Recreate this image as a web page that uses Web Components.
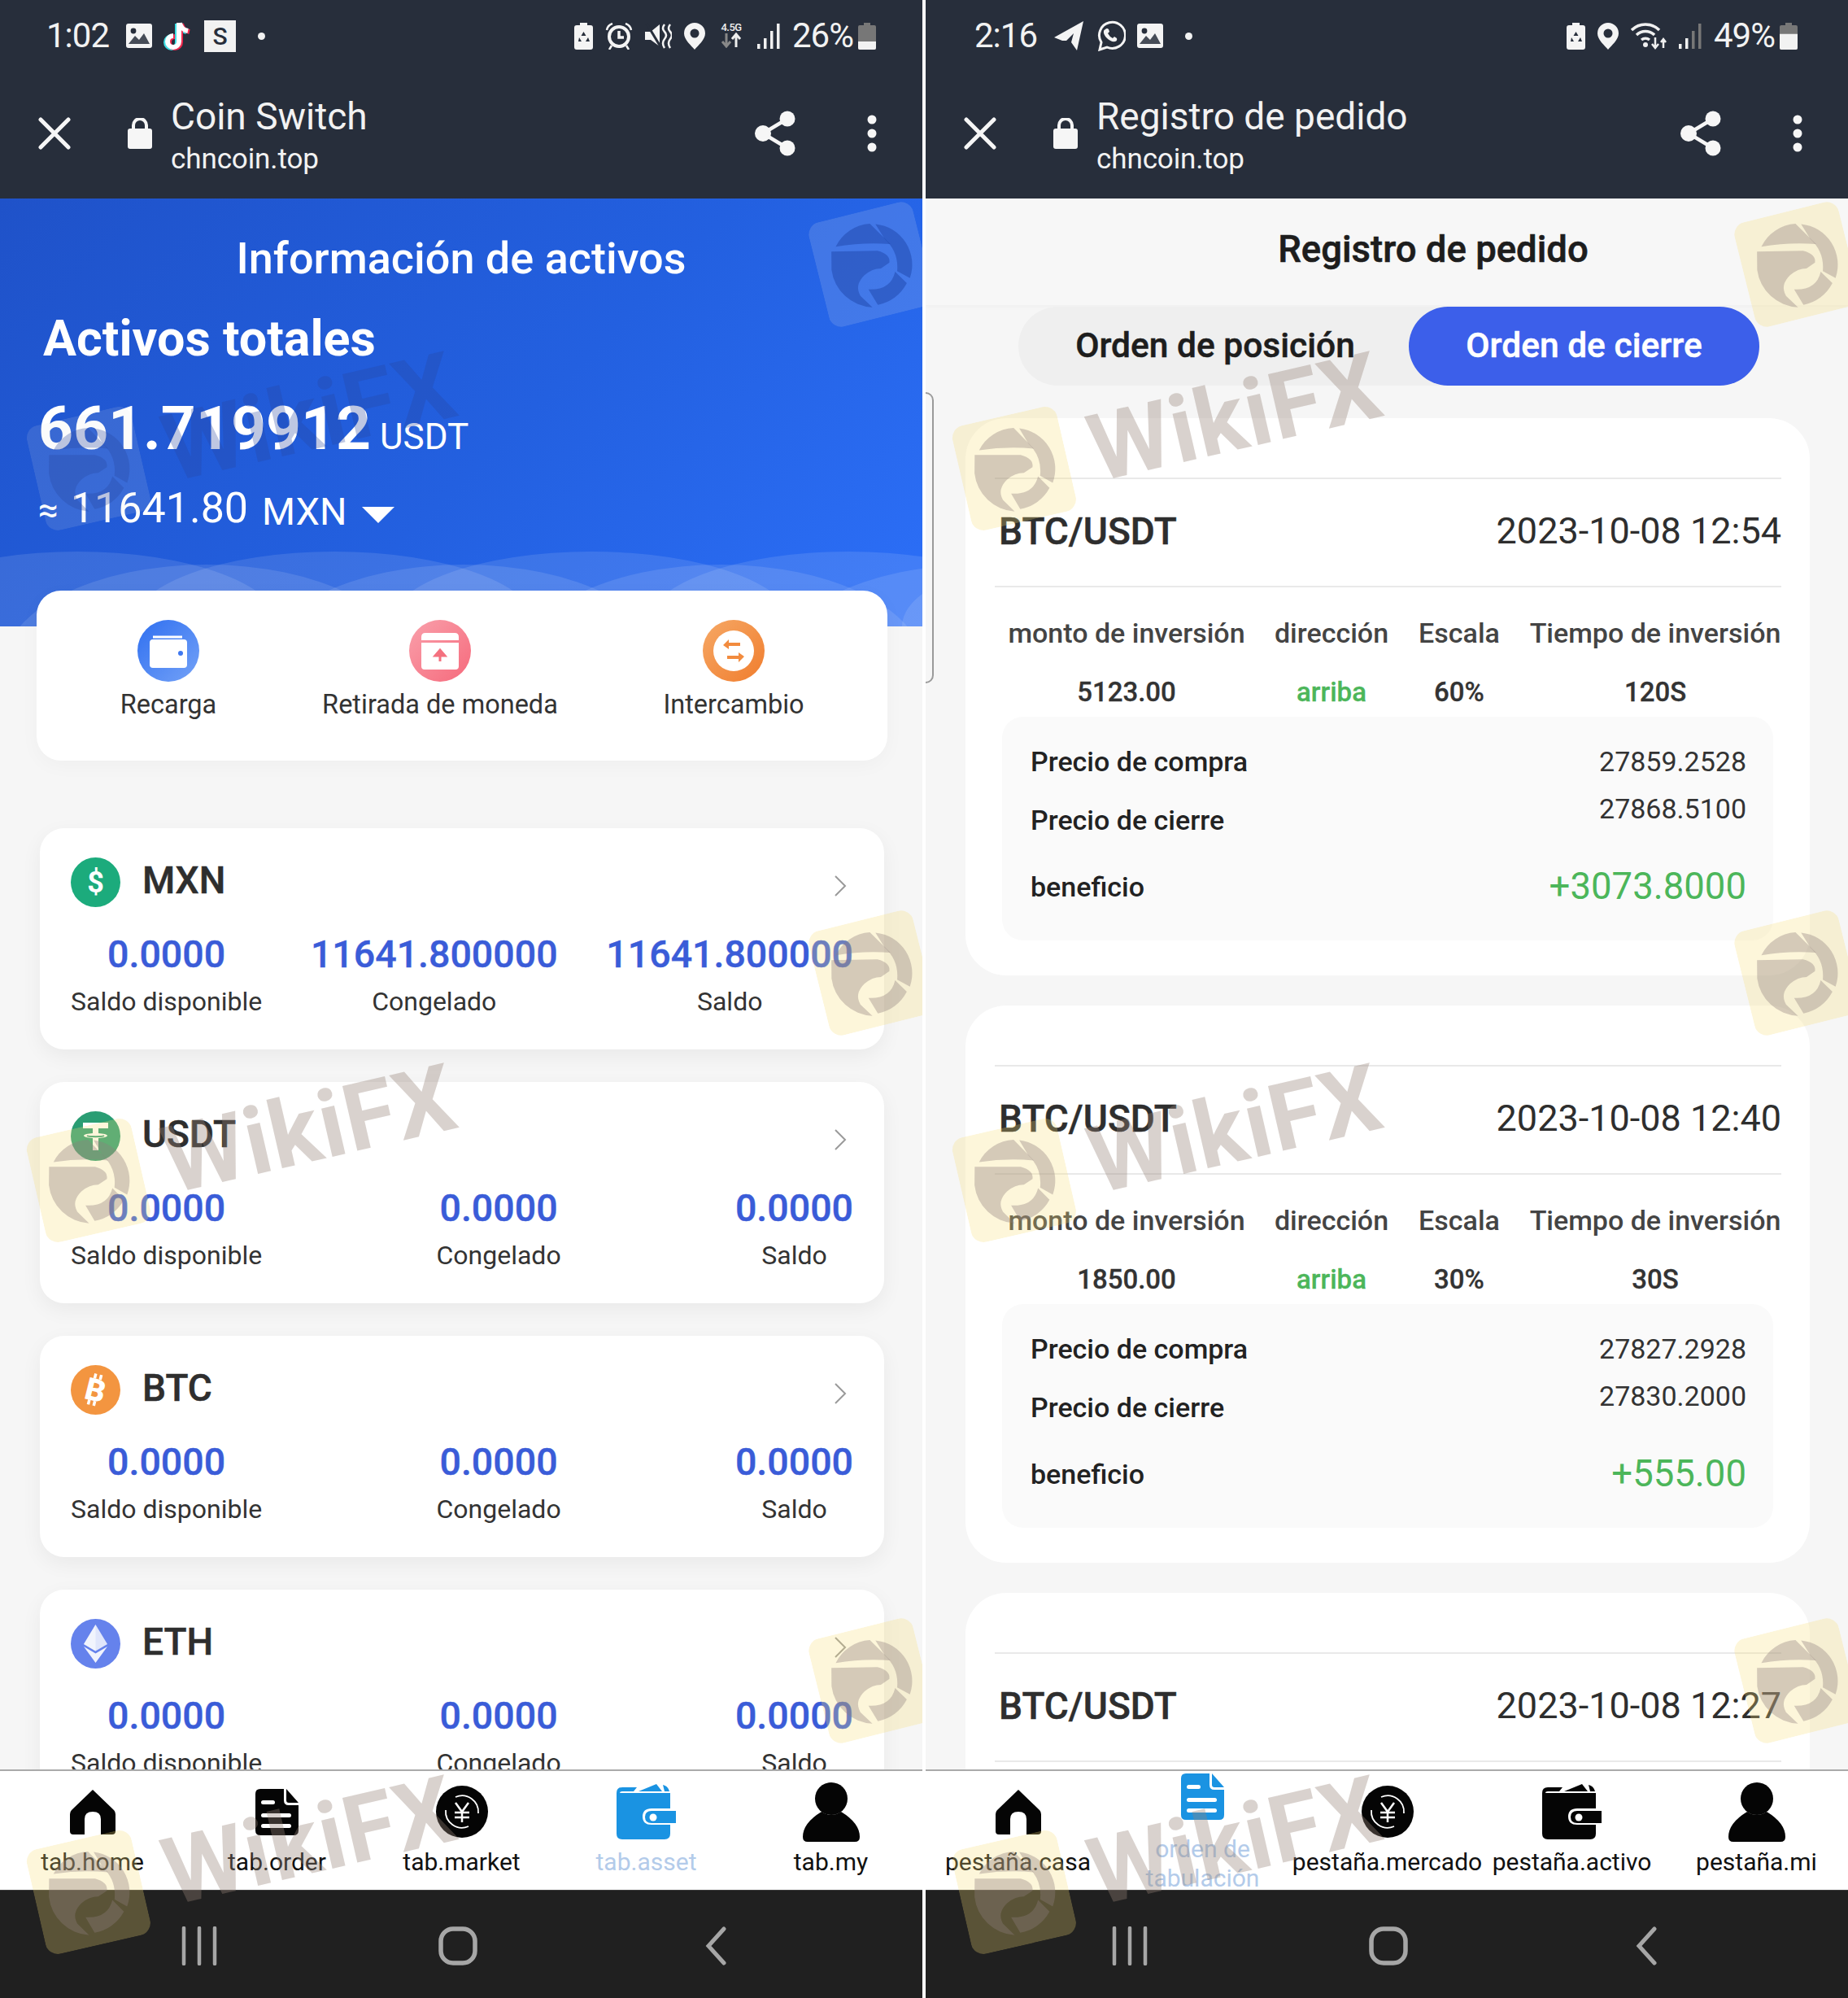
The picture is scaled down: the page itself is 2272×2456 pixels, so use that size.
<!DOCTYPE html>
<html lang="es"><head><meta charset="utf-8"><title>Coin Switch</title>
<style>
html,body{margin:0;padding:0;background:#fff}
body{font-family:Roboto,"Liberation Sans",sans-serif;width:2272px;height:2456px;overflow:hidden}
</style></head><body>
<two-screens>
  <phone-pane>
    <app-top time="1:02" pct="26" fill="0.3" lpad="57" rpad="57" title="Coin Switch" left="image,tiktok,sbox" right="recycle,alarm,mute,pin,net,signal"></app-top>
    <pane-body>
      <asset-hero></asset-hero>
      <action-card></action-card>
      <asset-list>
        <asset-card name="MXN" coin="mxn" a="0.0000" b="11641.800000" c="11641.800000"></asset-card>
        <asset-card name="USDT" coin="usdt" a="0.0000" b="0.0000" c="0.0000"></asset-card>
        <asset-card name="BTC" coin="btc" a="0.0000" b="0.0000" c="0.0000"></asset-card>
        <asset-card name="ETH" coin="eth" a="0.0000" b="0.0000" c="0.0000"></asset-card>
      </asset-list>
    </pane-body>
    <tab-bar labels="tab.home|tab.order|tab.market|tab.asset|tab.my" active="3"></tab-bar>
    <nav-keys></nav-keys>
    <wx-mark x="1005" y="259" mode="logo" style="--bg:rgba(220,225,235,.16);--ink:rgba(30,70,170,.5)"></wx-mark>
    <wx-mark x="38" y="467" mode="full" style="--bg:rgba(225,225,225,.13);--ink:rgba(40,70,160,.3)"></wx-mark>
    <wx-mark x="1005" y="1130" mode="logo"></wx-mark>
    <wx-mark x="38" y="1342" mode="full"></wx-mark>
    <wx-mark x="1005" y="2000" mode="logo"></wx-mark>
    <wx-mark x="38" y="2217" mode="full"></wx-mark>
  </phone-pane>
  <phone-pane>
    <app-top time="2:16" pct="49" fill="0.58" lpad="60" rpad="62" title="Registro de pedido" left="telegram,whatsapp,image" right="recycle,pin,wifi,signal2"></app-top>
    <pane-body>
      <order-head></order-head>
      <order-list>
        <order-card pair="BTC/USDT" date="2023-10-08 12:54" amount="5123.00" scale="60%" time="120S" buy="27859.2528" close="27868.5100" gain="+3073.8000"></order-card>
        <order-card pair="BTC/USDT" date="2023-10-08 12:40" amount="1850.00" scale="30%" time="30S" buy="27827.2928" close="27830.2000" gain="+555.00"></order-card>
        <order-card pair="BTC/USDT" date="2023-10-08 12:27" head-only></order-card>
      </order-list>
      <scroll-edge></scroll-edge>
    </pane-body>
    <tab-bar labels="pestaña.casa|orden de tabulación|pestaña.mercado|pestaña.activo|pestaña.mi" active="1"></tab-bar>
    <nav-keys shift="6"></nav-keys>
    <wx-mark x="1005" y="259" mode="logo"></wx-mark>
    <wx-mark x="38" y="467" mode="full"></wx-mark>
    <wx-mark x="1005" y="1130" mode="logo"></wx-mark>
    <wx-mark x="38" y="1342" mode="full"></wx-mark>
    <wx-mark x="1005" y="2000" mode="logo"></wx-mark>
    <wx-mark x="38" y="2217" mode="full"></wx-mark>
  </phone-pane>
</two-screens>
<script>
const DK='#272e3b';
const svg=(w,h,vb,body)=>`<svg width="${w}" height="${h}" viewBox="${vb}" style="display:block;flex:none">${body}</svg>`;
const ICON={
 image:svg(32,30,'0 0 32 30',`<rect width="32" height="30" rx="3" fill="#f4f4f4"/><circle cx="9" cy="9" r="3.4" fill="${DK}"/><path d="M3 25l8-10 5 5 6-8 7 13z" fill="${DK}" opacity=".85"/>`),
 tiktok:svg(36,39,'0 0 36 39',`<g fill="none" stroke-width="6"><path d="M19 3v23a7 7 0 1 1-7-7" stroke="#3fe0e6" transform="translate(-2 1)"/><path d="M20 3q1 8 10 10" stroke="#3fe0e6" transform="translate(-2 1)"/><path d="M19 3v23a7 7 0 1 1-7-7" stroke="#f0294f" transform="translate(2 1)"/><path d="M20 3q1 8 10 10" stroke="#f0294f" transform="translate(2 1)"/><path d="M19 3v23a7 7 0 1 1-7-7" stroke="#fff"/><path d="M20 3q1 8 10 10" stroke="#fff"/></g>`),
 recycle:svg(23,33,'0 0 23 33',`<path d="M7 0h9v3h4q3 0 3 3v24q0 3-3 3H3q-3 0-3-3V6q0-3 3-3h4z" fill="#f4f4f4"/><path d="M11.500 11l3 5h-6zM6 18l3 5H5zM17 18l2 5h-5z" fill="${DK}"/>`),
 alarm:svg(34,33,'0 0 34 33',`<circle cx="17" cy="17" r="12" fill="none" stroke="#f4f4f4" stroke-width="4"/><path d="M17 10v8h6" fill="none" stroke="#f4f4f4" stroke-width="3.500"/><path d="M2 9q1-6 7-8M32 9q-1-6-7-8M8 28l-3 5M26 28l3 5" fill="none" stroke="#f4f4f4" stroke-width="2.500"/>`),
 mute:svg(33,33,'0 0 33 33',`<path d="M0 11h7L18 2v27L7 21H0z" fill="#f4f4f4"/><path d="M2 1l18 30" stroke="${DK}" stroke-width="3"/><path d="M24 2q-4 5 0 9t0 9 0 11M31 2q-4 5 0 9t0 9 0 11" fill="none" stroke="#f4f4f4" stroke-width="2.500"/>`),
 pin:svg(26,33,'0 0 26 33',`<path d="M13 0a13 13 0 0 1 13 13c0 8-9 15-13 20C9 28 0 21 0 13A13 13 0 0 1 13 0z" fill="#f4f4f4"/><circle cx="13" cy="13" r="5.500" fill="${DK}"/>`),
 net:`<span style="display:block;width:34px;height:34px;font:500 13px/13px Roboto;color:#eee;text-align:center;letter-spacing:-.5px">4.5G<svg width="34" height="19" viewBox="0 0 34 19" style="display:block"><path d="M11 1v14M6 11l5 6 5-6" stroke="#888" stroke-width="3" fill="none"/><path d="M23 18V4M18 8l5-6 5 6" stroke="#eee" stroke-width="3" fill="none"/></svg></span>`,
 signal:svg(29,31,'0 0 29 31',`<g fill="#f0f0f0"><rect x="0" y="25" width="3.500" height="6"/><rect x="8" y="18" width="3.500" height="13"/><rect x="16" y="9" width="3.500" height="22"/><rect x="24" y="0" width="3.500" height="31"/></g>`),
 signal2:svg(29,31,'0 0 29 31',`<rect x="0" y="25" width="3.500" height="6" fill="#f0f0f0"/><rect x="8" y="18" width="3.500" height="13" fill="#f0f0f0"/><rect x="16" y="9" width="3.500" height="22" fill="#777"/><rect x="24" y="0" width="3.500" height="31" fill="#777"/>`),
 wifi:svg(44,36,'0 0 44 36',`<g fill="none" stroke="#f0f0f0" stroke-width="3.500"><path d="M1 11a24 24 0 0 1 34 0"/><path d="M7 17a16 16 0 0 1 22 0"/><path d="M13 23a8 8 0 0 1 10 0"/></g><circle cx="18" cy="29" r="3" fill="#f0f0f0"/><path d="M30 20v12M26 28l4 5 4-5" stroke="#f0f0f0" stroke-width="2.500" fill="none"/><path d="M40 33V23M37 26l3-4 3 4" stroke="#f0f0f0" stroke-width="2.500" fill="none"/>`),
 telegram:svg(37,36,'0 0 37 36',`<path d="M36 0L0 20l10 4 5 0 9-9-3 11 7 10z" fill="#f4f4f4"/>`),
 whatsapp:svg(37,38,'0 0 37 38',`<path d="M5 36l2-9A16 16 0 1 1 14 33z" fill="none" stroke="#f4f4f4" stroke-width="3"/><path d="M12 11q2-2 4 0l1 3-2 2q2 4 6 6l2-2 3 2q1 3-2 4-5 1-10-4t-4-9q0-1 2-2z" fill="#f4f4f4"/>`),
};
const css=s=>`<style>${s}</style>`;
function def(name,render){customElements.define(name,class extends HTMLElement{constructor(){super();this.attachShadow({mode:'open'})}connectedCallback(){this.shadowRoot.innerHTML=render(this)}})}

def('two-screens',()=>css(`:host{display:grid;grid-template-columns:1134px 1134px;column-gap:4px;width:2272px;height:2456px;background:#fff}`)+`<slot></slot>`);
def('phone-pane',()=>css(`:host{display:flex;flex-direction:column;height:2456px;width:1134px;position:relative;overflow:hidden;background:#f6f6f6}`)+`<slot></slot>`);
def('pane-body',()=>css(`:host{display:block;flex:1;min-height:0;overflow:hidden;position:relative;background:#f6f6f6}`)+`<slot></slot>`);

def('app-top',e=>{
 const a=n=>e.getAttribute(n);
 const ic=n=>n==='sbox'?`<span class="s">S</span>`:(ICON[n]||'');
 const f=parseFloat(a('fill'));
 return css(`:host{display:block;background:${DK};color:#f2f2f2;height:244px;box-sizing:border-box}
 .st{height:88px;display:flex;align-items:center;padding:0 ${a('rpad')}px 0 ${a('lpad')}px;box-sizing:border-box}
 .t{font:400 42px/48px Roboto;margin-right:21px;letter-spacing:-1px}
 .l,.r{display:flex;align-items:center;gap:14px}
 .dot{width:9px;height:9px;border-radius:50%;background:#f2f2f2;margin-left:13px}
 .r{margin-left:auto;gap:15px}
 .p{font:400 42px/48px Roboto;margin-left:-1px;letter-spacing:-1px}
 .s{display:block;width:39px;height:39px;background:#f2f2f2;color:${DK};font:500 30px/39px Roboto;text-align:center}
 .bat{width:22px;height:33px;margin-left:-9px}
 .br{height:88px;margin-top:32px;display:flex;align-items:center;padding:0 56px 0 47px}
 .x{margin-right:70px}.lk{margin-right:23px}
 .tt{flex:1;min-width:0;margin-top:4px}
 .n{font:400 46px/58px Roboto;color:#f2f2f2}
 .u{font:400 35px/47px Roboto;color:#f2f2f2;letter-spacing:-.1px}
 .sh{margin-right:87px}
 `)+`<div class="st"><span class="t">${a('time')}</span><div class="l">${a('left').split(',').map(ic).join('')}<span class="dot"></span></div>
 <div class="r">${a('right').split(',').map(ic).join('')}<span class="p">${a('pct')}%</span>
 <svg class="bat" viewBox="0 0 22 33"><path d="M7 0h8v3h5q2 0 2 2v26q0 2-2 2H2q-2 0-2-2V5q0-2 2-2h5z" fill="#777"/><path d="M0 ${33-33*f}h22v${33*f-2}q0 2-2 2H2q-2 0-2-2z" fill="#f2f2f2"/></svg></div></div>
 <div class="br">
 <svg class="x" width="40" height="40" viewBox="0 0 40 40"><path d="M3 3l34 34M37 3L3 37" stroke="#f6f6f6" stroke-width="5" stroke-linecap="round"/></svg>
 <svg class="lk" width="30" height="38" viewBox="0 0 30 38"><path d="M7 14V9a8 8 0 0 1 16 0v5" fill="none" stroke="#f6f6f6" stroke-width="4"/><rect y="13" width="30" height="25" rx="3" fill="#f6f6f6"/></svg>
 <div class="tt"><div class="n">${a('title')}</div><div class="u">chncoin.top</div></div>
 <svg class="sh" width="52" height="56" viewBox="0 0 52 56"><path d="M41 10L11 28l30 18" fill="none" stroke="#f6f6f6" stroke-width="4.500"/><circle cx="41" cy="10" r="9.500" fill="#f6f6f6"/><circle cx="11" cy="28" r="10" fill="#f6f6f6"/><circle cx="41" cy="46" r="9.500" fill="#f6f6f6"/></svg>
 <svg width="12" height="46" viewBox="0 0 12 46"><circle cx="6" cy="6" r="5.500" fill="#f6f6f6"/><circle cx="6" cy="23" r="5.500" fill="#f6f6f6"/><circle cx="6" cy="40" r="5.500" fill="#f6f6f6"/></svg>
 </div>`;
});

def('asset-hero',()=>{
 const wave=(o,cy,ry)=>[0,1,2,3,4].map(i=>`<ellipse cx="${o+i*316}" cy="${cy}" rx="250" ry="${ry}" fill="#fff" opacity=".11"/>`).join('');
 return css(`:host{display:block;height:526px;box-sizing:border-box;position:relative;background:linear-gradient(135deg,#1f52c9 0%,#2360e0 55%,#2c6ff8 100%);color:#fff;overflow:hidden}
 .h{font:500 54px/60px Roboto;text-align:center;padding-top:44px}
 .a{font:700 61px/70px Roboto;padding-left:53px;margin-top:33px}
 .tot{padding-left:47px;margin-top:30px;height:90px;display:flex;align-items:baseline}
 .tot b{font:700 75px/90px Roboto}
 .tot span{font:400 44px/50px Roboto;margin-left:11px}
 .ap{padding-left:47px;margin-top:29px;height:50px;display:flex;align-items:baseline;font:400 52px/50px Roboto}
 .ap i{font:400 44px/50px Roboto;font-style:normal;margin-right:15px}
 .ap span{font:400 47px/50px Roboto;margin-left:17px;position:relative;top:3px}
 .tri{width:0;height:0;border:20px solid transparent;border-top:20px solid #fff;border-bottom:0;margin-left:18px;align-self:center;position:relative;top:8px}
 svg{position:absolute;left:0;bottom:0}
 `)+`<svg width="1134" height="96" viewBox="0 0 1134 96">${wave(95,96,92)}${wave(254,146,126)}</svg>
 <div class="h">Información de activos</div><div class="a">Activos totales</div>
 <div class="tot"><b>661.719912</b><span>USDT</span></div>
 <div class="ap"><i>≈</i>11641.80<span>MXN</span><div class="tri"></div></div>`;
});

def('action-card',()=>{
 const item=(g,ic,l)=>`<div class="i"><div class="c" style="background:${g}">${ic}</div><div class="l">${l}</div></div>`;
 return css(`:host{display:grid;grid-template-columns:324px 344px 378px;position:relative;width:1046px;height:209px;margin:-44px 0 0 45px;background:#fff;border-radius:30px;box-shadow:0 6px 24px rgba(0,0,0,.03)}
 .i{display:flex;flex-direction:column;align-items:center;padding-top:36px}
 .c{width:76px;height:76px;border-radius:50%;display:flex;align-items:center;justify-content:center}
 .l{font:400 32.500px/40px Roboto;color:#333;margin-top:8px;white-space:nowrap}`)+
 item('linear-gradient(135deg,#2f6ff0,#74a2f7)',`<svg width="46" height="42" viewBox="0 0 46 42"><path d="M4 4h36" stroke="#fff" stroke-width="3"/><rect y="7" width="46" height="35" rx="4" fill="#fff"/><circle cx="38" cy="24" r="3" fill="#3f78ef"/></svg>`,'Recarga')+
 item('linear-gradient(135deg,#f9a0ab,#f66a7c)',`<svg width="46" height="46" viewBox="0 0 46 46"><path d="M0 6q0-5 5-5h36q5 0 5 5v4H0zM0 13h46v29q0 4-4 4H4q-4 0-4-4z" fill="#fff"/><path d="M23 36V25M17 29l6-7 6 7z" stroke="#f4717f" stroke-width="3" fill="#f4717f"/></svg>`,'Retirada de moneda')+
 item('linear-gradient(135deg,#f6a865,#f07d2e)',`<svg width="50" height="50" viewBox="0 0 50 50"><circle cx="25" cy="25" r="25" fill="#fff"/><path d="M19 11l-7 7 7 5v-4h14v-4H19zM31 39l7-7-7-5v4H17v4h14z" fill="#f28b3e"/></svg>`,'Intercambio');
});

def('asset-list',()=>css(`:host{display:flex;flex-direction:column;gap:40px;margin:83px 47px 0 49px;padding-bottom:40px}`)+`<slot></slot>`);
const COIN={
 mxn:`<svg width="61" height="61" viewBox="0 0 61 61"><circle cx="30.500" cy="30.500" r="30.500" fill="#1cab7c"/><text x="30.500" y="43" text-anchor="middle" font-family="Roboto" font-weight="700" font-size="36" fill="#fff">$</text></svg>`,
 usdt:`<svg width="61" height="61" viewBox="0 0 61 61"><circle cx="30.500" cy="30.500" r="30.500" fill="#2a9d73"/><path d="M15 14h31v7H34v6c6 .3 11 1.500 11 3s-5 2.700-11 3v15h-7V33c-6-.3-11-1.500-11-3s5-2.700 11-3v-6H15z" fill="#fff"/><path d="M20 30c2 1.500 19 1.500 21 0" fill="none" stroke="#2a9d73" stroke-width="2"/></svg>`,
 btc:`<svg width="61" height="61" viewBox="0 0 61 61"><circle cx="30.500" cy="30.500" r="30.500" fill="#f39540"/><g transform="rotate(14 30.500 30.500)"><text x="30.500" y="44" text-anchor="middle" font-family="Roboto" font-weight="900" font-size="38" fill="#fff">B</text><path d="M26 11v6M33 11v6M26 44v6M33 44v6" stroke="#fff" stroke-width="3.500"/></g></svg>`,
 eth:`<svg width="61" height="61" viewBox="0 0 61 61"><circle cx="30.500" cy="30.500" r="30.500" fill="#6582ec"/><path d="M30.500 7L16 31l14.500 8.500L45 31z" fill="#fff" opacity=".8"/><path d="M30.500 7v32.500L16 31z" fill="#fff" opacity=".55"/><path d="M16 34l14.500 20L45 34l-14.500 8.500z" fill="#fff" opacity=".9"/></svg>`};
def('asset-card',e=>{
 const g=n=>e.getAttribute(n);
 const col=(v,l)=>`<div class="c"><div class="v">${v}</div><div class="l">${l}</div></div>`;
 return css(`:host{display:block;height:272px;box-sizing:border-box;background:#fff;border-radius:30px;padding:36px 38px 0 38px;box-shadow:0 8px 26px rgba(0,0,0,.055)}
 .t{display:flex;align-items:center;height:61px}
 .n{font:500 46px/61px Roboto;color:#2e2e2e;margin-left:27px;position:relative;top:-2px;-webkit-text-stroke:.5px #2e2e2e}
 .ch{margin-left:auto;margin-right:8px;position:relative;top:4px}
 .r{display:flex;justify-content:space-between;margin-top:32px}
 .c{text-align:center}
 .v{font:500 46.500px/52px Roboto;color:#3a5cd8;-webkit-text-stroke:.4px #3a5cd8}
 .l{font:400 32px/40px Roboto;color:#333;margin-top:12px;white-space:nowrap}`)+
 `<div class="t">${COIN[g('coin')]}<div class="n">${g('name')}</div><svg class="ch" width="16" height="26" viewBox="0 0 16 26"><path d="M2 1l12 12L2 25" fill="none" stroke="#9a9a9a" stroke-width="2"/></svg></div>
 <div class="r">${col(g('a'),'Saldo disponible')}${col(g('b'),'Congelado')}${col(g('c'),'Saldo')}</div>`;
});

def('order-head',()=>css(`:host{display:block}
 .t{height:131px;box-sizing:border-box;padding-left:114px;text-align:center;font:500 45.500px/126px Roboto;color:#1d1d1d;background:#f7f7f7;box-shadow:0 2px 6px rgba(0,0,0,.03);-webkit-text-stroke:.6px #1d1d1d}
 .p{display:grid;grid-template-columns:480px 431px;width:911px;height:97px;margin:2px 0 0 114px;border-radius:49px;background:#efefef;font:500 42.500px/95px Roboto;text-align:center;color:#1d1d1d;-webkit-text-stroke:.5px}
 .p div:first-child{padding-left:4px}
 .a{background:#3c5fea;color:#fff;border-radius:49px}`)+`<div class="t">Registro de pedido</div><div class="p"><div>Orden de posición</div><div class="a">Orden de cierre</div></div>`);
def('order-list',()=>css(`:host{display:flex;flex-direction:column;gap:37px;margin:40px 47px 0 49px}`)+`<slot></slot>`);
def('order-card',e=>{
 const g=n=>e.getAttribute(n);
 const head=`<div class="ln"></div><div class="hd"><b>${g('pair')}</b><span>${g('date')}</span></div><div class="ln"></div>`;
 const body=e.hasAttribute('head-only')?'':`<div class="g h"><div>monto de inversión</div><div>dirección</div><div>Escala</div><div>Tiempo de inversión</div></div>
 <div class="g v"><div>${g('amount')}</div><div class="up">arriba</div><div>${g('scale')}</div><div>${g('time')}</div></div>
 <div class="box">
  <div class="row"><b>Precio de compra</b><span>${g('buy')}</span></div>
  <div class="row r2"><b>Precio de cierre</b><span>${g('close')}</span></div>
  <div class="row r3"><b>beneficio</b><span>${g('gain')}</span></div>
 </div>`;
 return css(`:host{display:block;height:685px;box-sizing:border-box;background:#fff;border-radius:50px;padding:73px 35px 0 36px}
 .ln{height:2px;background:#e9e9e9}
 .hd{height:131px;display:flex;justify-content:space-between;align-items:center;padding:0 0 3px 5px;box-sizing:border-box;color:#2e2e2e}
 .hd b{font:500 46px/60px Roboto;-webkit-text-stroke:.5px}.hd span{font:400 45px/60px Roboto}
 .g{display:grid;grid-template-columns:322px 182px 132px 350px;text-align:center;white-space:nowrap;margin-left:1px}
 .h{font:500 34px/40px Roboto;color:#444;margin-top:36px}
 .v{font:500 33px/40px Roboto;color:#333;margin-top:33px;-webkit-text-stroke:.3px}
 .up{color:#4cb65a}
 .box{margin:10px 10px 0 9px;height:275px;box-sizing:border-box;background:#fafafa;border-radius:26px;padding:35px 33px 0 35px}
 .row{display:flex;justify-content:space-between;align-items:flex-start;color:#222}
 .row b{font:500 34px/40px Roboto}.row span{font:400 34px/40px Roboto;color:#333}
 .r2{margin-top:32px}.r2 span{margin-top:-14px}
 .r3{margin-top:32px;align-items:center;height:60px}.r3 span{font:400 45.500px/60px Roboto;color:#4cb65a}`)+head+body;
});
def('scroll-edge',()=>css(`:host{position:absolute;left:0;top:238px;width:10px;height:358px;box-sizing:border-box;border:2px solid #9a9a9a;border-left:0;border-radius:0 12px 12px 0}`));

const ACT='#1a93e2';
const TAB=[
 c=>svg(56,56,'0 0 56 56',`<path d="M28 1L54 26q2 2 2 5v21q0 4-4 4H38V37q0-9-10-9t-10 9v19H4q-4 0-4-4V31q0-3 2-5z" fill="${c}"/>`),
 c=>svg(53,57,'0 0 53 57',`<path d="M6 0h29v14q0 6 6 6h12v31q0 6-6 6H6q-6 0-6-6V6q0-6 6-6z" fill="${c}"/><path d="M38 0l15 17H41q-3 0-3-3z" fill="${c}"/><rect x="7" y="14" width="17" height="5" rx="2.500" fill="#fff"/><rect x="7" y="30" width="37" height="5" rx="2.500" fill="#fff"/><rect x="7" y="43" width="37" height="5" rx="2.500" fill="#fff"/>`),
 c=>svg(64,64,'0 0 64 64',`<circle cx="32" cy="32" r="32" fill="${c}"/><g fill="none" stroke="#fff" stroke-width="1.800"><path d="M52 34a20 20 0 0 0-28-20M12 30a20 20 0 0 0 28 20"/><path d="M24 21l8 11 8-11M32 32v13M23 33h18M23 39h18" stroke-width="2.500"/></g>`),
 c=>svg(73,68,'0 0 73 68',`<path d="M0 11q0-7 7-7h18L21 9H7q-3 0-3 2h62v19H43q-11 0-11 10t11 10h23v11q0 7-7 7H7q-7 0-7-7z" fill="${c}"/><path d="M27 9L49 0l7 9zM57 1q6 1 8 8h-6z" fill="${c}"/><path d="M43 33h30v15H43q-8 0-8-7.500t8-7.500z" fill="${c}"/><circle cx="45" cy="41" r="4.500" fill="#fff"/>`),
 c=>svg(70,73,'0 0 70 73',`<ellipse cx="35" cy="20" rx="20" ry="20" fill="${c}"/><path d="M23 36q12 8 24 0 23 14 23 31 0 6-6 6H6q-6 0-6-6 0-17 23-31z" fill="${c}"/>`)];
def('tab-bar',e=>{
 const labels=e.getAttribute('labels').split('|'),act=+e.getAttribute('active');
 return css(`:host{display:grid;grid-template-columns:repeat(5,227px);padding-left:0;height:148px;flex:none;background:#fff;border-top:2px solid #aaa;box-sizing:border-box;position:relative}
 .i{display:flex;flex-direction:column;align-items:center;padding-top:13px;min-width:0;color:#111}
 .ib{height:74px;display:flex;align-items:center;justify-content:center}
 .l{font:400 30px/36px Roboto;margin-top:7px;text-align:center;white-space:nowrap}
 .on{color:#b3cbea}
 .up{padding-top:3px}.up .ib{height:57px;margin-bottom:18px}.up .l{margin-top:0;white-space:normal;width:170px}`)+
 labels.map((l,i)=>`<div class="i ${i==act?'on':''} ${i==act&&l.includes(' ')?'up':''}"><div class="ib">${TAB[i](i==act?ACT:'#050505')}</div><div class="l">${l}</div></div>`).join('');
});
def('nav-keys',e=>css(`:host{display:grid;grid-template-columns:490px 146px 488px;height:133px;flex:none;background:#202020;align-items:center;box-sizing:border-box;border-top:1px solid #3c3c3c;justify-items:center;padding-top:3px;padding-left:${e.getAttribute('shift')||0}px}`)+
 `<svg width="44" height="48" viewBox="0 0 44 48"><path d="M3 2v44M22 2v44M41 2v44" stroke="#a6a6a6" stroke-width="4.500" stroke-linecap="round"/></svg>
 <svg width="48" height="48" viewBox="0 0 48 48"><rect x="3" y="3" width="42" height="42" rx="15" fill="none" stroke="#a6a6a6" stroke-width="5.500"/></svg>
 <svg width="26" height="48" viewBox="0 0 26 48"><path d="M23 3L4 24l19 21" fill="none" stroke="#a6a6a6" stroke-width="5" stroke-linecap="round"/></svg>`);

def('wx-mark',e=>{
 const x=e.getAttribute('x'),y=e.getAttribute('y'),full=e.getAttribute('mode')==='full';
 const logo=`<svg width="132" height="132" viewBox="0 0 100 100" style="flex:none"><rect width="100" height="100" rx="12" fill="var(--bg,rgba(248,222,120,.27))"/>
 <g fill="var(--ink,rgba(140,125,125,.36))"><path d="M22 26A38 38 0 0 1 58 13L72 36Q48 28 22 26Z"/><path d="M63 14.500A38 38 0 0 1 82 71L72 62Q78 45 68 30Z"/><path d="M78 75A38 38 0 0 1 47 88L42 72Q62 78 70 62Z"/><path d="M17 29.400L58.700 39Q70 45 66.900 52.500L57.900 55.900Q50 54 41.500 58.300Q30 65 33.200 76L41.500 89A40 40 0 0 1 13 46Z"/></g></svg>`;
 return css(`:host{position:absolute;left:${x}px;top:${y}px;${full?'width:514px':'width:132px'};height:132px;display:flex;align-items:center;gap:30px;transform:rotate(${full?-13:-14}deg);pointer-events:none;z-index:5}
 span{font:700 115px/132px Roboto;letter-spacing:1px;color:var(--ink,rgba(150,130,120,.36));white-space:nowrap}`)+logo+(full?`<span>WikiFX</span>`:'');
});
</script>
</body></html>
